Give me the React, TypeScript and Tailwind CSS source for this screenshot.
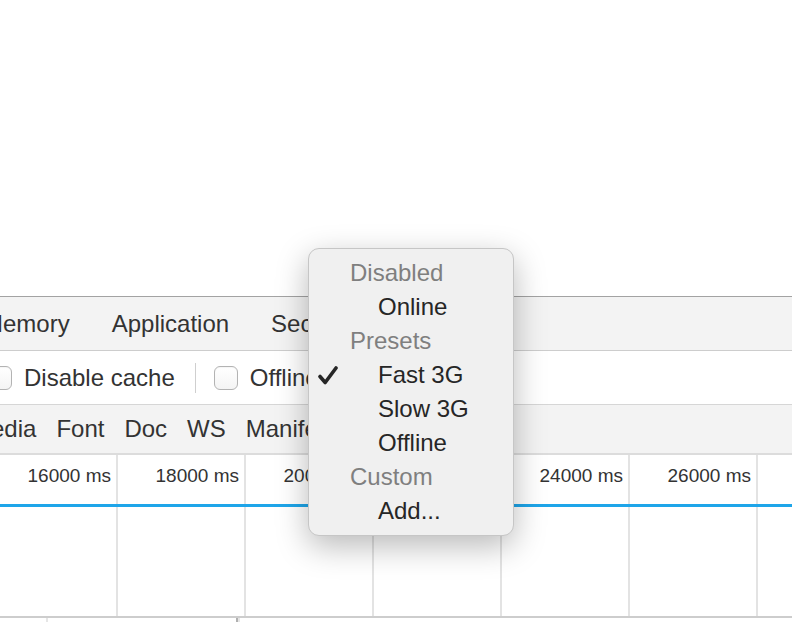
import React from "react";

const font = { fontFamily: '"Liberation Sans", Helvetica, Arial, sans-serif' };

function Checkbox() {
  return (
    <div className="w-[24px] h-[24px] shrink-0 rounded-[6px] border border-[#b3b3b3] bg-gradient-to-b from-white to-[#f4f4f4] shadow-[inset_0_1px_1px_rgba(0,0,0,0.04)]" />
  );
}

const labels = ["16000 ms", "18000 ms", "20000 ms", "22000 ms", "24000 ms", "26000 ms", ""];

export default function App() {
  return (
    <div
      className="relative w-[792px] h-[622px] overflow-hidden bg-white flex flex-col text-[#333]"
      style={font}
    >
      {/* empty page area */}
      <div className="h-[296px] shrink-0 bg-white" />

      {/* tab bar */}
      <div className="h-[55px] shrink-0 border-t border-t-[#a3a3a3] border-b border-b-[#cdcdcd] bg-[#f3f3f3] flex items-center">
        <div className="flex items-center gap-[42px] ml-[-17px] text-[24px] leading-none text-[#333] whitespace-nowrap">
          <span>Memory</span>
          <span>Application</span>
          <span>Security</span>
          <span>Audits</span>
        </div>
      </div>

      {/* toolbar */}
      <div className="h-[54px] shrink-0 border-b border-b-[#d6d6d6] bg-white flex items-center">
        <div className="flex items-center ml-[-12px] text-[24px] leading-none text-[#333] whitespace-nowrap">
          <Checkbox />
          <span className="ml-[12px]">Disable cache</span>
          <div className="ml-[20px] w-[1px] h-[30px] bg-[#cfcfcf]" />
          <div className="ml-[18px]">
            <Checkbox />
          </div>
          <span className="ml-[12px]">Offline</span>
        </div>
      </div>

      {/* filter bar */}
      <div className="h-[50px] shrink-0 border-b-2 border-b-[#dcdcdc] bg-[#f3f3f3] flex items-center">
        <div className="flex items-center gap-[20px] ml-[-29px] text-[24px] leading-none text-[#333] whitespace-nowrap">
          <span>Media</span>
          <span>Font</span>
          <span>Doc</span>
          <span>WS</span>
          <span>Manifest</span>
          <span>Other</span>
        </div>
      </div>

      {/* timeline header */}
      <div className="h-[49px] shrink-0 flex ml-[-10px]">
        {labels.map((l, i) => (
          <div
            key={i}
            className="w-[128px] shrink-0 border-r-2 border-r-[#e3e3e3] flex justify-end pr-[5px] pt-[11px] text-[19px] leading-[19px] text-[#333] whitespace-nowrap"
          >
            {l}
          </div>
        ))}
      </div>
      <div className="h-[3px] shrink-0 bg-[#1ea5e9]" />
      <div className="h-[111px] shrink-0 flex ml-[-10px] border-b-2 border-b-[#cdcdcd]">
        {labels.map((_, i) => (
          <div key={i} className="w-[128px] shrink-0 border-r-2 border-r-[#e3e3e3]" />
        ))}
      </div>
      <div className="flex-1 flex">
        <div className="w-[48px] shrink-0 border-r-2 border-r-[#e6e6e6]" />
        <div className="w-[190px] shrink-0 border-r-2 border-r-[#b0b0b0]" />
        <div className="w-[2px] bg-[#e6e6e6]" />
      </div>

      {/* throttling dropdown menu */}
      <div className="absolute left-[308px] top-[248px] w-[206px] h-[288px] rounded-[11px] border border-[#c6c6c6] bg-[#f0f0f0] shadow-[0_10px_32px_rgba(0,0,0,0.28)] py-[7px] text-[24px] whitespace-nowrap">
        <div className="h-[34px] flex items-center pl-[41px] text-[#7f7f7f]">Disabled</div>
        <div className="h-[34px] flex items-center pl-[69px] text-[#262626]">Online</div>
        <div className="h-[34px] flex items-center pl-[41px] text-[#7f7f7f]">Presets</div>
        <div className="h-[34px] flex items-center pl-[9px] text-[#262626]">
          <div className="w-[60px] flex items-center">
            <svg width="20" height="19" viewBox="0 0 20 19">
              <path
                d="M2 10.5 L7.2 16.5 L18 2"
                fill="none"
                stroke="#262626"
                strokeWidth="3.6"
                strokeLinecap="round"
                strokeLinejoin="round"
              />
            </svg>
          </div>
          <span>Fast 3G</span>
        </div>
        <div className="h-[34px] flex items-center pl-[69px] text-[#262626]">Slow 3G</div>
        <div className="h-[34px] flex items-center pl-[69px] text-[#262626]">Offline</div>
        <div className="h-[34px] flex items-center pl-[41px] text-[#7f7f7f]">Custom</div>
        <div className="h-[34px] flex items-center pl-[69px] text-[#262626]">Add...</div>
      </div>
    </div>
  );
}
